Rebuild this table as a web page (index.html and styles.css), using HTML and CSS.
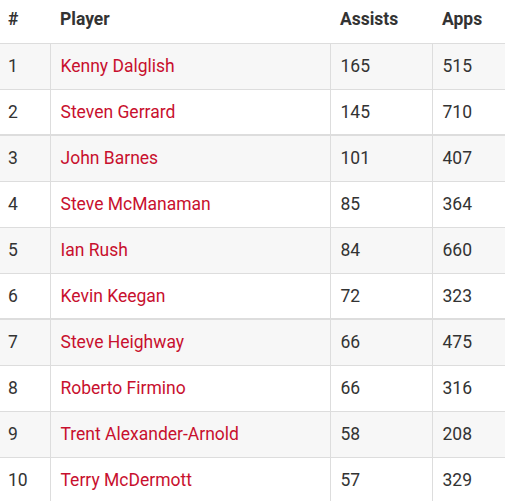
FILE: index.html
```html
<!DOCTYPE html>
<html lang="en">
<head>
    <meta charset="UTF-8">
    <meta name="viewport" content="width=device-width, initial-scale=1.0">
    <title>Liverpool Top Assists</title>
    <link rel="stylesheet" href="styles.css">
</head>
<body>
    <table class="stats-table">
        <thead>
            <tr>
                <th class="col-rank">#</th>
                <th class="col-player">Player</th>
                <th class="col-assists">Assists</th>
                <th class="col-apps">Apps</th>
            </tr>
        </thead>
        <tbody>
            <tr class="odd">
                <td>1</td>
                <td><a href="#">Kenny Dalglish</a></td>
                <td>165</td>
                <td>515</td>
            </tr>
            <tr class="group-end">
                <td>2</td>
                <td><a href="#">Steven Gerrard</a></td>
                <td>145</td>
                <td>710</td>
            </tr>
            <tr class="odd">
                <td>3</td>
                <td><a href="#">John Barnes</a></td>
                <td>101</td>
                <td>407</td>
            </tr>
            <tr>
                <td>4</td>
                <td><a href="#">Steve McManaman</a></td>
                <td>85</td>
                <td>364</td>
            </tr>
            <tr class="odd">
                <td>5</td>
                <td><a href="#">Ian Rush</a></td>
                <td>84</td>
                <td>660</td>
            </tr>
            <tr class="group-end">
                <td>6</td>
                <td><a href="#">Kevin Keegan</a></td>
                <td>72</td>
                <td>323</td>
            </tr>
            <tr class="odd">
                <td>7</td>
                <td><a href="#">Steve Heighway</a></td>
                <td>66</td>
                <td>475</td>
            </tr>
            <tr>
                <td>8</td>
                <td><a href="#">Roberto Firmino</a></td>
                <td>66</td>
                <td>316</td>
            </tr>
            <tr class="odd">
                <td>9</td>
                <td><a href="#">Trent Alexander-Arnold</a></td>
                <td>58</td>
                <td>208</td>
            </tr>
            <tr>
                <td>10</td>
                <td><a href="#">Terry McDermott</a></td>
                <td>57</td>
                <td>329</td>
            </tr>
        </tbody>
    </table>
</body>
</html>
```

FILE: styles.css
```css
body {
    font-family: Roboto, "Liberation Sans", sans-serif;
    font-size: 17.5px;
    color: #333;
    background: #fff;
    margin: 0;
}
.stats-table {
    width: 505px;
    border-collapse: collapse;
    table-layout: fixed;
}
.col-rank {
    width: 50px;
}
.col-player {
    width: 280px;
}
.col-assists {
    width: 102px;
}
.stats-table th {
    height: 43px;
    padding: 0 10px 4px;
    text-align: left;
    font-weight: 700;
    color: #333;
    border-bottom: 1px solid #ddd;
    box-sizing: border-box;
}
.stats-table th:first-child {
    padding-left: 8px;
}
.stats-table td {
    height: 46px;
    padding: 0 10px;
    border-bottom: 1px solid #ddd;
    box-sizing: border-box;
}
.stats-table td:first-child {
    padding-left: 8px;
}
.stats-table td + td {
    border-left: 1px solid #ddd;
}
.stats-table tr.odd td {
    background: #f7f7f7;
}
.stats-table tr.group-end td {
    border-bottom: 2px solid #ddd;
}
.stats-table a {
    color: #c8102e;
    text-decoration: none;
}
```
